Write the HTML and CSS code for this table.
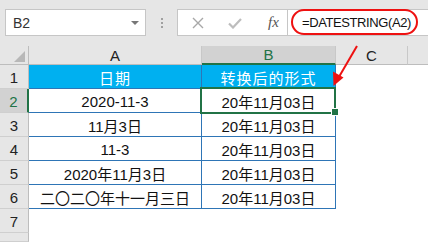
FILE: index.html
```html
<!DOCTYPE html>
<html lang="zh">
<head>
<meta charset="utf-8">
<link rel="stylesheet" href="styles.css">
</head>
<body>
<div class="app">
  <div class="toolbar">
    <div class="namebox"><span class="name">B2</span><span class="caret"></span></div>
    <div class="dots"><i></i><i></i><i></i></div>
    <div class="btns">
      <svg class="ico" width="12" height="12" viewBox="0 0 12 12"><path d="M1 1L11 11M11 1L1 11" stroke="#a8a8a8" stroke-width="1.4" fill="none"/></svg>
      <svg class="ico" width="14" height="12" viewBox="0 0 14 12"><path d="M1 6.5L5 10.5L13 2" stroke="#bdbdbd" stroke-width="2.2" fill="none"/></svg>
      <span class="fx">fx</span>
    </div>
    <div class="formula"><span class="ftext">=DATESTRING(A2)</span></div>
  </div>
  <div class="sheet">
    <div class="hd corner"><span class="tri"></span></div>
    <div class="hd col">A</div>
    <div class="hd col sel">B</div>
    <div class="hd col">C</div>
    <div class="hd col last"></div>

    <div class="rh">1</div>
    <div class="c title">日期</div>
    <div class="c title">转换后的形式</div>
    <div class="e"></div><div class="e"></div>

    <div class="rh selrow">2</div>
    <div class="c">2020-11-3</div>
    <div class="c active">20年11月03日</div>
    <div class="e"></div><div class="e"></div>

    <div class="rh">3</div>
    <div class="c">11月3日</div>
    <div class="c">20年11月03日</div>
    <div class="e"></div><div class="e"></div>

    <div class="rh">4</div>
    <div class="c">11-3</div>
    <div class="c">20年11月03日</div>
    <div class="e"></div><div class="e"></div>

    <div class="rh">5</div>
    <div class="c">2020年11月3日</div>
    <div class="c">20年11月03日</div>
    <div class="e"></div><div class="e"></div>

    <div class="rh">6</div>
    <div class="c">二〇二〇年十一月三日</div>
    <div class="c">20年11月03日</div>
    <div class="e"></div><div class="e"></div>

    <div class="rh">7</div>
    <div class="e"></div><div class="e"></div><div class="e"></div><div class="e"></div>

    <div class="rh"></div>
    <div class="e"></div><div class="e"></div><div class="e"></div><div class="e"></div>
  </div>
  <svg class="arrow" width="428" height="242" viewBox="0 0 428 242">
    <line x1="357" y1="46" x2="339.5" y2="76" stroke="#ee1111" stroke-width="2"/>
    <polygon points="333.5,86 333,71.5 343.5,77.5" fill="#ee1111"/>
  </svg>
</div>
</body>
</html>
```

FILE: styles.css
```css
* { box-sizing: border-box; }
html, body { margin: 0; padding: 0; }
body {
  width: 428px;
  height: 242px;
  overflow: hidden;
  background: #ffffff;
  font-family: "Liberation Sans", "Noto Sans CJK SC", sans-serif;
  color: #1a1a1a;
}
.app { position: relative; width: 428px; height: 242px; overflow: hidden; }

.toolbar {
  height: 46px;
  background: #e6e6e6;
  display: flex;
  align-items: flex-start;
  padding: 9px 0 0 5px;
}
.namebox {
  width: 141px;
  height: 27px;
  background: #fff;
  border: 1px solid #c6c6c6;
  display: flex;
  align-items: center;
  justify-content: space-between;
  padding: 0 6px 0 7px;
  font-size: 14px;
  color: #333;
}
.caret {
  width: 0; height: 0;
  border-left: 4px solid transparent;
  border-right: 4px solid transparent;
  border-top: 4px solid #777;
}
.dots {
  width: 31px;
  height: 27px;
  display: flex;
  flex-direction: column;
  align-items: center;
  justify-content: center;
  gap: 2px;
}
.dots i { display: block; width: 2px; height: 2px; background: #a0a0a0; }
.btns {
  width: 111px;
  height: 27px;
  background: #fff;
  border: 1px solid #c6c6c6;
  display: flex;
  align-items: center;
  padding: 0 0 0 14px;
  gap: 22px;
}
.btns .ico:nth-child(2) { margin-left: 2px; }
.fx {
  font-family: "Liberation Serif", serif;
  font-style: italic;
  font-size: 15px;
  color: #555;
  margin-left: 4px;
}
.formula {
  flex: 1;
  height: 27px;
  background: #fff;
  border-top: 1px solid #c6c6c6;
  border-bottom: 1px solid #c6c6c6;
  display: flex;
  align-items: center;
  padding-left: 3px;
}
.ftext {
  display: inline-flex;
  align-items: center;
  height: 26px;
  width: 127px;
  margin-top: -1px;
  border: 2px solid #ee1111;
  border-radius: 13px;
  padding-left: 9px;
  font-size: 13px;
  letter-spacing: -0.4px;
  color: #111;
  white-space: nowrap;
}

.sheet {
  display: grid;
  grid-template-columns: 29px 173px 134px 72px 20px;
  grid-template-rows: 19px repeat(7, 24px) 9px;
}
.hd {
  background: #e6e6e6;
  border-right: 1px solid #c8c8c8;
  border-bottom: 1px solid #bdbdbd;
  display: flex;
  align-items: center;
  justify-content: center;
  font-size: 15px;
  color: #222;
}
.hd.last { border-right: none; }
.hd.sel {
  background: #d2d2d2;
  color: #217346;
  border-bottom: 2px solid #217346;
}
.corner { position: relative; border-right-color: #bdbdbd; }
.tri {
  position: absolute;
  right: 3px;
  bottom: 2px;
  width: 0; height: 0;
  border-left: 11px solid transparent;
  border-bottom: 11px solid #b8b8b8;
}
.rh {
  background: #e6e6e6;
  border-right: 1px solid #bdbdbd;
  border-bottom: 1px solid #cfcfcf;
  display: flex;
  align-items: center;
  justify-content: center;
  font-size: 15px;
  padding-top: 2px;
  color: #222;
}
.rh.selrow {
  background: #d2d2d2;
  color: #217346;
  border-right: 2px solid #217346;
}
.c {
  border-right: 1px solid #2e75b6;
  border-bottom: 1px solid #2e75b6;
  display: flex;
  align-items: center;
  justify-content: center;
  font-size: 15px;
  padding-top: 1px;
  color: #111;
  white-space: nowrap;
}
.c.title {
  background: #00b0f0;
  color: #fff;
  font-size: 15px;
  letter-spacing: 1px;
}
.c.active { position: relative; }
.c.active::after {
  content: "";
  position: absolute;
  left: -2px; top: -2px; right: -1px; bottom: -2px;
  border: 2px solid #217346;
}
.c.active::before {
  content: "";
  position: absolute;
  right: -4px;
  bottom: -4px;
  width: 6px;
  height: 6px;
  background: #217346;
  border: 1px solid #fff;
  z-index: 2;
}
.e { background: #fff; }
.arrow { position: absolute; left: 0; top: 0; pointer-events: none; }
```
